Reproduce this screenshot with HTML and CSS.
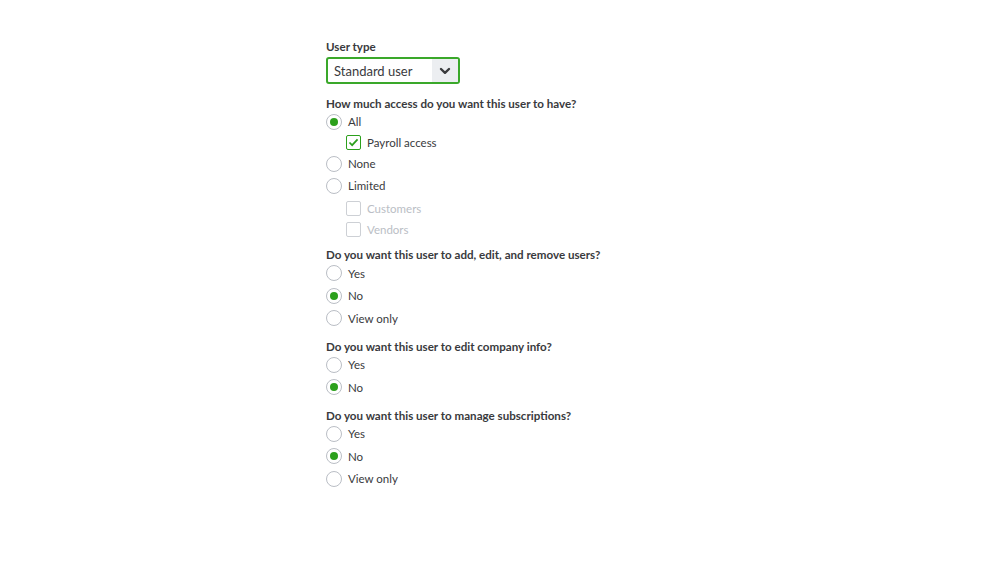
FILE: index.html
```html
<!DOCTYPE html>
<html lang="en">
<head>
<meta charset="utf-8">
<title>User settings</title>
<link rel="stylesheet" href="styles.css">
</head>
<body>
<div class="form">
  <div class="label">User type</div>
  <div class="select">
    <span class="select-value">Standard user</span>
    <span class="select-arrow">
      <svg width="12" height="8" viewBox="0 0 12 8"><path d="M2 2 L6 5.8 L10 2" fill="none" stroke="#393a3d" stroke-width="2.4" stroke-linecap="round" stroke-linejoin="round"/></svg>
    </span>
  </div>

  <div class="question q1">How much access do you want this user to have?</div>
  <div class="options">
    <div class="opt h21"><span class="radio on"></span>All</div>
    <div class="opt sub h21"><span class="check on"><svg width="11" height="9" viewBox="0 0 12 10"><path d="M1.5 5 L4.5 8 L10.5 1.5" fill="none" stroke="#2ca01c" stroke-width="1.9"/></svg></span>Payroll access</div>
    <div class="opt h21"><span class="radio"></span>None</div>
    <div class="opt h23"><span class="radio"></span>Limited</div>
    <div class="opt sub disabled h22"><span class="check"></span>Customers</div>
    <div class="opt sub disabled h21"><span class="check"></span>Vendors</div>
  </div>

  <div class="question q2">Do you want this user to add, edit, and remove users?</div>
  <div class="options">
    <div class="opt"><span class="radio"></span>Yes</div>
    <div class="opt"><span class="radio on"></span>No</div>
    <div class="opt"><span class="radio"></span>View only</div>
  </div>

  <div class="question">Do you want this user to edit company info?</div>
  <div class="options">
    <div class="opt"><span class="radio"></span>Yes</div>
    <div class="opt"><span class="radio on"></span>No</div>
  </div>

  <div class="question">Do you want this user to manage subscriptions?</div>
  <div class="options">
    <div class="opt"><span class="radio"></span>Yes</div>
    <div class="opt"><span class="radio on"></span>No</div>
    <div class="opt"><span class="radio"></span>View only</div>
  </div>
</div>
</body>
</html>
```
FILE: styles.css
```css
html, body {
  margin: 0;
  padding: 0;
  background: #ffffff;
}
body {
  font-family: Lato, "Noto Sans", "Liberation Sans", sans-serif;
  color: #393a3d;
  font-size: 12px;
}
.form {
  display: flex;
  flex-direction: column;
  align-items: flex-start;
  padding: 39px 0 0 326px;
}
.label {
  font-weight: 700;
  font-size: 11.6px;
  line-height: 16px;
  height: 16px;
}
.select {
  margin-top: 2px;
  box-sizing: border-box;
  width: 134px;
  height: 27px;
  border: 2px solid #3aa82a;
  border-radius: 3px;
  display: flex;
  align-items: stretch;
  overflow: hidden;
}
.select-value {
  flex: 1;
  display: flex;
  align-items: center;
  padding-left: 6px;
  font-size: 13px;
  color: #393a3d;
}
.select-arrow {
  width: 26px;
  background: #eceef1;
  display: flex;
  align-items: center;
  justify-content: center;
}
.question {
  font-weight: 700;
  font-size: 11.6px;
  line-height: 16px;
  height: 16px;
  margin-top: 9px;
}
.question.q1 { margin-top: 12px; }
.question.q2 { margin-top: 7px; }
.options {
  display: flex;
  flex-direction: column;
  margin-top: -1px;
}
.opt {
  height: 22.5px;
  display: flex;
  align-items: center;
  gap: 6px;
  font-size: 11.5px;
  color: #393a3d;
}
.opt.h21 { height: 21px; }
.opt.h22 { height: 22px; }
.opt.h23 { height: 23px; }
.opt.sub { padding-left: 20px; }
.opt.disabled { color: #babec5; }
.radio {
  box-sizing: border-box;
  width: 16px;
  height: 16px;
  border: 1px solid #babec5;
  border-radius: 50%;
  display: flex;
  align-items: center;
  justify-content: center;
  background: #fff;
}
.radio.on::after {
  content: "";
  width: 8px;
  height: 8px;
  border-radius: 50%;
  background: #2ca01c;
}
.check {
  box-sizing: border-box;
  width: 15px;
  height: 15px;
  border: 1px solid #cdd0d5;
  border-radius: 2px;
  display: flex;
  align-items: center;
  justify-content: center;
  background: #fff;
}
.check.on {
  border-color: #2ca01c;
}
```
